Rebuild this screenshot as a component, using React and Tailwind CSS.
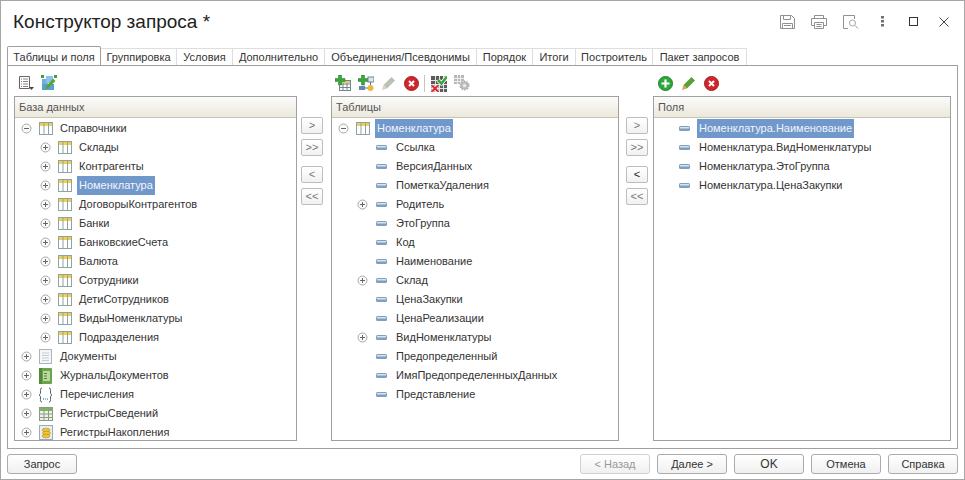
import React from 'react';

const font = { fontFamily: '"Liberation Sans", Arial, sans-serif' };

const tabs = [
  { name: 'Группировка', w: 'w-[76px]' },
  { name: 'Условия', w: 'w-[56px]' },
  { name: 'Дополнительно', w: 'w-[92px]' },
  { name: 'Объединения/Псевдонимы', w: 'w-[152px]' },
  { name: 'Порядок', w: 'w-[56px]' },
  { name: 'Итоги', w: 'w-[43px]' },
  { name: 'Построитель', w: 'w-[77px]' },
  { name: 'Пакет запросов', w: 'w-[94px]' },
];

const dbRows = [
  { label: 'Справочники', icon: 'table', open: true },
  { label: 'Склады', icon: 'table', level: 1, plus: true },
  { label: 'Контрагенты', icon: 'table', level: 1, plus: true },
  { label: 'Номенклатура', icon: 'table', level: 1, plus: true, selected: true },
  { label: 'ДоговорыКонтрагентов', icon: 'table', level: 1, plus: true },
  { label: 'Банки', icon: 'table', level: 1, plus: true },
  { label: 'БанковскиеСчета', icon: 'table', level: 1, plus: true },
  { label: 'Валюта', icon: 'table', level: 1, plus: true },
  { label: 'Сотрудники', icon: 'table', level: 1, plus: true },
  { label: 'ДетиСотрудников', icon: 'table', level: 1, plus: true },
  { label: 'ВидыНоменклатуры', icon: 'table', level: 1, plus: true },
  { label: 'Подразделения', icon: 'table', level: 1, plus: true },
  { label: 'Документы', icon: 'doc', plus: true },
  { label: 'ЖурналыДокументов', icon: 'journal', plus: true },
  { label: 'Перечисления', icon: 'enum', plus: true },
  { label: 'РегистрыСведений', icon: 'info', plus: true },
  { label: 'РегистрыНакопления', icon: 'coins', plus: true },
];

const tableRows = [
  { label: 'Номенклатура', icon: 'table', open: true, selected: true },
  { label: 'Ссылка', icon: 'field', level: 1 },
  { label: 'ВерсияДанных', icon: 'field', level: 1 },
  { label: 'ПометкаУдаления', icon: 'field', level: 1 },
  { label: 'Родитель', icon: 'field', level: 1, plus: true },
  { label: 'ЭтоГруппа', icon: 'field', level: 1 },
  { label: 'Код', icon: 'field', level: 1 },
  { label: 'Наименование', icon: 'field', level: 1 },
  { label: 'Склад', icon: 'field', level: 1, plus: true },
  { label: 'ЦенаЗакупки', icon: 'field', level: 1 },
  { label: 'ЦенаРеализации', icon: 'field', level: 1 },
  { label: 'ВидНоменклатуры', icon: 'field', level: 1, plus: true },
  { label: 'Предопределенный', icon: 'field', level: 1 },
  { label: 'ИмяПредопределенныхДанных', icon: 'field', level: 1 },
  { label: 'Представление', icon: 'field', level: 1 },
];

const fieldRows = [
  { label: 'Номенклатура.Наименование', icon: 'field', selected: true },
  { label: 'Номенклатура.ВидНоменклатуры', icon: 'field' },
  { label: 'Номенклатура.ЭтоГруппа', icon: 'field' },
  { label: 'Номенклатура.ЦенаЗакупки', icon: 'field' },
];

const Expander = ({ open }) => (
  <svg width="11" height="11" viewBox="0 0 11 11">
    <circle cx="5.5" cy="5.5" r="4.5" fill="#fbfbfb" stroke="#a8a8a8" />
    <path d={open ? 'M3 5.5h5' : 'M3 5.5h5M5.5 3v5'} stroke="#666" />
  </svg>
);

const TableIcon = () => (
  <svg width="14" height="13" viewBox="0 0 14 13">
    <rect x="0.5" y="0.5" width="13" height="12" fill="#fff" stroke="#8ea3a8" />
    <rect x="1" y="1" width="12" height="3" fill="#f3cf4d" />
    <path d="M5 .5v12M9.500 .5v12" stroke="#8ea3a8" />
  </svg>
);

const FieldIcon = () => (
  <svg width="11" height="5" viewBox="0 0 11 5">
    <rect x="0" y="0" width="11" height="5" rx="1.500" fill="#7f9fbd" />
    <rect x="1" y="1" width="9" height="1.500" fill="#d7e3ee" />
  </svg>
);

const DocIcon = () => (
  <svg width="13" height="15" viewBox="0 0 13 15">
    <rect x="0.500" y="0.500" width="12" height="14" fill="#f4f6f8" stroke="#a9b4bd" />
    <path d="M3 4h7M3 6.500h7M3 9h7M3 11.500h7" stroke="#c3ccd3" />
  </svg>
);

const JournalIcon = () => (
  <svg width="13" height="16" viewBox="0 0 13 16">
    <rect x="0" y="0" width="13" height="16" rx="1" fill="#6ba24a" />
    <rect x="0" y="0" width="3" height="16" fill="#4f8a36" />
    <rect x="4" y="3" width="7" height="10" fill="#b9d8a4" />
    <path d="M5 5.500h3M5 8h3M5 10.500h3" stroke="#4d8a34" />
  </svg>
);

const EnumIcon = () => (
  <svg width="15" height="16" viewBox="0 0 15 16" fill="none">
    <path d="M4 1C2 1 2.500 3 2.500 5S2.500 7 1 8c1.500 1 1.500 1 1.500 3S2 15 4 15M11 1c2 0 1.500 2 1.500 4s0 2 1.500 3c-1.500 1-1.500 1-1.500 3s.5 4-1.500 4" stroke="#4d6472" />
    <path d="M5 12h1M7 12h1M9 12h1" stroke="#2b6f9a" />
  </svg>
);

const InfoIcon = () => (
  <svg width="14" height="14" viewBox="0 0 14 14">
    <rect x="0.500" y="0.500" width="13" height="13" fill="#eef2e4" stroke="#8a9a86" />
    <rect x="1" y="1" width="12" height="3" fill="#7fb45f" />
    <path d="M5 .5v13M9.500 .5v13M.5 7h13M.5 10.500h13" stroke="#8a9a86" />
  </svg>
);

const CoinsIcon = () => (
  <svg width="14" height="15" viewBox="0 0 14 15">
    <rect x="0.500" y="0.500" width="13" height="14" fill="#e9eff5" stroke="#9aaab8" />
    <ellipse cx="7" cy="5" rx="4" ry="1.800" fill="#efc53a" stroke="#b88a17" strokeWidth="0.600" />
    <ellipse cx="7.500" cy="8" rx="4" ry="1.800" fill="#efc53a" stroke="#b88a17" strokeWidth="0.600" />
    <ellipse cx="7" cy="11" rx="4" ry="1.800" fill="#efc53a" stroke="#b88a17" strokeWidth="0.600" />
  </svg>
);

const rowIcons = {
  table: TableIcon,
  field: FieldIcon,
  doc: DocIcon,
  journal: JournalIcon,
  enum: EnumIcon,
  info: InfoIcon,
  coins: CoinsIcon,
};

const TreeRow = ({ row }) => {
  const Icon = rowIcons[row.icon];
  return (
    <div className="flex h-[19px] items-center pl-[2px]">
      {row.level === 1 && <span className="w-[19px] shrink-0" />}
      <span className="flex w-[19px] shrink-0 justify-center">
        {(row.plus || row.open) && <Expander open={row.open} />}
      </span>
      <span className="flex w-[19px] shrink-0 justify-center">
        <Icon />
      </span>
      <span className={`ml-[3px] flex h-[19px] items-center whitespace-nowrap px-[2px] ${row.selected ? 'bg-[#7098cb] text-[#f2f5fa]' : 'text-[#333]'}`}>
        {row.label}
      </span>
    </div>
  );
};

const Panel = ({ title, rows, width }) => (
  <div className={`h-[345px] shrink-0 overflow-hidden border border-[#a0a0a0] bg-white ${width}`}>
    <div className="flex h-[21px] items-center border-b border-[#c9c5b4] bg-gradient-to-b from-[#fbfbfa] to-[#ece8dc] pl-[4px] text-[#555]">
      {title}
    </div>
    <div className="pt-[1px]">
      {rows.map((row) => (
        <TreeRow key={row.label} row={row} />
      ))}
    </div>
  </div>
);

const ArrowButton = ({ label, dark, className = '' }) => (
  <div className={`flex h-[17px] w-[22px] items-center justify-center rounded-[2px] border border-[#bdbdbd] bg-gradient-to-b from-white to-[#f1f1f1] ${dark ? 'text-[#222]' : 'text-[#777]'} ${className}`}>
    {label}
  </div>
);

const ArrowColumn = ({ className, darkBack }) => (
  <div className={`flex shrink-0 flex-col pt-[21px] ${className}`}>
    <ArrowButton label=">" />
    <ArrowButton label=">>" className="mt-[5px]" />
    <ArrowButton label="<" dark={darkBack} className="mt-[10px]" />
    <ArrowButton label="<<" className="mt-[5px]" />
  </div>
);

const FooterButton = ({ label, disabled, className = '' }) => (
  <div className={`flex h-[20px] w-[70px] items-center justify-center rounded-[3px] border bg-gradient-to-b from-white to-[#f0f0f0] ${disabled ? 'border-[#d0d0d0] text-[#999]' : 'border-[#ababab] text-[#333]'} ${className}`}>
    {label}
  </div>
);

const PlusRound = () => (
  <svg width="15" height="15" viewBox="0 0 15 15">
    <circle cx="7.500" cy="7.500" r="7" fill="#2fa83a" stroke="#1f7f2a" />
    <path d="M7.500 3.500v8M3.500 7.500h8" stroke="#fff" strokeWidth="2.200" />
  </svg>
);

const CloseRound = () => (
  <svg width="15" height="15" viewBox="0 0 15 15">
    <circle cx="7.500" cy="7.500" r="7" fill="#d0252b" stroke="#a81c20" />
    <path d="M5 5l5 5M10 5l-5 5" stroke="#fff" strokeWidth="2" />
  </svg>
);

const Pencil = ({ body = '#55a23a', tip = '#e0a050' }) => (
  <svg width="15" height="15" viewBox="0 0 15 15">
    <path d="M10.500 1l3.500 3.500-8 8L2.500 9z" fill={body} />
    <path d="M2.500 9L6 12.500 1 14z" fill={tip} />
  </svg>
);

const ListDown = () => (
  <svg width="15" height="15" viewBox="0 0 15 15" fill="none">
    <path d="M.5.500h10v12H.5z" stroke="#666" fill="#fff" />
    <path d="M2 3h1M2 5.500h1M2 8h1M2 10.500h1" stroke="#c0694b" />
    <path d="M4 3h5M4 5.500h5M4 8h5M4 10.500h5" stroke="#888" />
    <path d="M10 11h5l-2.500 3z" fill="#444" />
  </svg>
);

const QueryEdit = () => (
  <svg width="16" height="16" viewBox="0 0 16 16">
    <rect x="1" y="4" width="6" height="6" fill="#6fb0e0" />
    <rect x="5" y="1" width="7" height="7" fill="#8cc4ea" />
    <rect x="1" y="9" width="12" height="6" fill="#5b9fd4" />
    <path d="M0 0h3v3H0z" fill="#3aa53a" />
    <path d="M13 0h3v3h-3z" fill="#3aa53a" />
    <path d="M12 3.500l2.500 2.500-7 7L4 15l1-3.500z" fill="#5aa53a" />
  </svg>
);

const AddTable = () => (
  <svg width="16" height="16" viewBox="0 0 16 16">
    <rect x="4.500" y="5.500" width="11" height="10" fill="#fff" stroke="#71858f" />
    <path d="M8 5.500v10M12 5.500v10M4.500 9h11M4.500 12.500h11" stroke="#71858f" />
    <rect x="5" y="6" width="10" height="2" fill="#e8c860" />
    <path d="M3.500 0h3v3.500H10v3H6.500V10h-3V6.500H0v-3h3.500z" fill="#3aa53a" stroke="#1f7f2a" strokeWidth="0.500" />
  </svg>
);

const AddRelation = () => (
  <svg width="16" height="16" viewBox="0 0 16 16">
    <path d="M3.500 0h3v3.500H10v3H6.500V10h-3V6.500H0v-3h3.500z" fill="#3aa53a" stroke="#1f7f2a" strokeWidth="0.500" />
    <rect x="10" y="2" width="6" height="5" fill="#dfe6ec" stroke="#71858f" />
    <rect x="1" y="11" width="6" height="4" fill="#5e88b5" />
    <path d="M12.500 7v3M7 13h3" stroke="#55718a" />
    <circle cx="12.500" cy="13" r="3" fill="#eeb93a" />
  </svg>
);

const CheckCross = () => (
  <svg width="16" height="17" viewBox="0 0 16 17">
    <rect x="0" y="1" width="16" height="16" fill="#5c5c5c" />
    <path d="M0 5.500h16M0 9.500h16M0 13.500h16M4.500 1v16M8.500 1v16M12.500 1v16" stroke="#e4e4e4" />
    <path d="M7 5l3.500 3.500L16 1.500" fill="none" stroke="#fff" strokeWidth="4" />
    <path d="M7 5l3.500 3.500L16 1.500" fill="none" stroke="#3aa53a" strokeWidth="2.500" />
    <path d="M1 10.500l6 6M7 10.500l-6 6" stroke="#fff" strokeWidth="3.500" />
    <path d="M1 10.500l6 6M7 10.500l-6 6" stroke="#d9252b" strokeWidth="2" />
  </svg>
);

const TableGear = () => (
  <svg width="16" height="16" viewBox="0 0 16 16">
    <rect x="0" y="0" width="10" height="9" fill="#b8b8b8" />
    <path d="M0 3.500h10M0 6.500h10M3.500 0v9M6.500 0v9" stroke="#eee" />
    <circle cx="10.500" cy="10.500" r="4" fill="#c2c2c2" stroke="#ababab" strokeWidth="2" strokeDasharray="1.500 1" />
    <circle cx="10.500" cy="10.500" r="1.500" fill="#eee" />
  </svg>
);

const Floppy = () => (
  <svg width="15" height="14" viewBox="0 0 15 14" fill="none" stroke="#909090">
    <path d="M.5.5h11l3 3v10H.5z" />
    <path d="M3.500.5v4h7v-4M2.500 13.500v-5h10v5" />
    <path d="M4 10.500h7" />
  </svg>
);

const PrinterGlyph = () => (
  <svg width="16" height="14" viewBox="0 0 16 14" fill="none" stroke="#909090">
    <path d="M3.500 3.500v-3h9v3M3.500 10.500h-3v-7h15v7h-3" />
    <path d="M3.500 7.500h9v6h-9zM5.500 9.500h5M5.500 11.500h5" />
  </svg>
);

const PreviewGlyph = () => (
  <svg width="16" height="14" viewBox="0 0 16 14" fill="none" stroke="#909090">
    <path d="M5 13.500H.5V.5h11V4" />
    <circle cx="9.500" cy="8" r="3" stroke="#a8a8a8" />
    <path d="M12 10.500l3 3" />
  </svg>
);

const Kebab = () => (
  <svg width="3" height="11" viewBox="0 0 3 11" fill="#707070">
    <rect y="0" width="3" height="2.500" />
    <rect y="4" width="3" height="2.500" />
    <rect y="8" width="3" height="2.500" />
  </svg>
);

const Maximize = () => (
  <svg width="9" height="9" viewBox="0 0 9 9" fill="none" stroke="#333">
    <rect x="0.500" y="0.500" width="8" height="8" />
  </svg>
);

const CloseGlyph = () => (
  <svg width="10" height="10" viewBox="0 0 10 10" fill="none" stroke="#444">
    <path d="M.5.5l9 9M9.500.5l-9 9" />
  </svg>
);

export default function App() {
  return (
    <div className="flex h-[480px] w-[965px] flex-col border border-[#a6a6a6] bg-white text-[11px] leading-none" style={font}>
      {/* заголовок */}
      <div className="flex h-[45px] shrink-0 items-center pb-[4px] pl-[12px] pr-[15px]">
        <div className="text-[19px] text-[#222]">Конструктор запроса *</div>
        <div className="ml-auto flex items-center">
          <Floppy />
          <span className="ml-[16px]"><PrinterGlyph /></span>
          <span className="ml-[16px]"><PreviewGlyph /></span>
          <span className="ml-[22px]"><Kebab /></span>
          <span className="ml-[25px]"><Maximize /></span>
          <span className="ml-[21px]"><CloseGlyph /></span>
        </div>
      </div>

      {/* вкладки */}
      <div className="relative z-10 flex h-[19px] shrink-0 items-end pl-[6px]">
        <div className="flex h-[19px] w-[94px] items-center justify-center rounded-t-[2px] border border-b-0 border-[#a0a0a0] bg-white pt-[2px] text-[#333]">
          Таблицы и поля
        </div>
        {tabs.map((tab) => (
          <div key={tab.name} className={`flex h-[17px] items-center justify-center whitespace-nowrap border-r border-t border-[#dedede] pt-[1px] text-[#333] ${tab.w}`}>
            {tab.name}
          </div>
        ))}
      </div>

      <div className="mx-[6px] flex h-[384px] shrink-0 flex-col border border-[#a0a0a0] px-[6px]">
        <div className="flex h-[30px] shrink-0">
          <div className="flex w-[317px] shrink-0 items-center gap-[7px] pl-[5px] pt-[4px]">
            <ListDown />
            <QueryEdit />
          </div>
          <div className="flex w-[322px] shrink-0 items-center pl-[4px] pt-[4px]">
            <AddTable />
            <span className="ml-[7px]"><AddRelation /></span>
            <span className="ml-[7px]"><Pencil body="#b9c2b4" tip="#d8cfc0" /></span>
            <span className="ml-[8px]"><CloseRound /></span>
            <span className="ml-[5px] h-[17px] w-px bg-[#c8c8b8]" />
            <span className="ml-[6px]"><CheckCross /></span>
            <span className="ml-[7px]"><TableGear /></span>
          </div>
          <div className="flex items-center gap-[8px] pl-[5px] pt-[4px]">
            <PlusRound />
            <Pencil />
            <CloseRound />
          </div>
        </div>
        <div className="flex">
          <Panel title="База данных" rows={dbRows} width="w-[283px]" />
          <ArrowColumn className="ml-[4px] mr-[8px]" />
          <Panel title="Таблицы" rows={tableRows} width="w-[288px]" />
          <ArrowColumn className="ml-[7px] mr-[5px]" darkBack />
          <Panel title="Поля" rows={fieldRows} width="w-[298px]" />
        </div>
      </div>

      {/* кнопки */}
      <div className="flex flex-1 items-center px-[6px]">
        <FooterButton label="Запрос" />
        <FooterButton label="< Назад" disabled className="ml-auto" />
        <FooterButton label="Далее >" className="ml-[7px]" />
        <FooterButton label="OK" className="ml-[7px] text-[12px]" />
        <FooterButton label="Отмена" className="ml-[7px]" />
        <FooterButton label="Справка" className="ml-[7px]" />
      </div>
    </div>
  );
}
